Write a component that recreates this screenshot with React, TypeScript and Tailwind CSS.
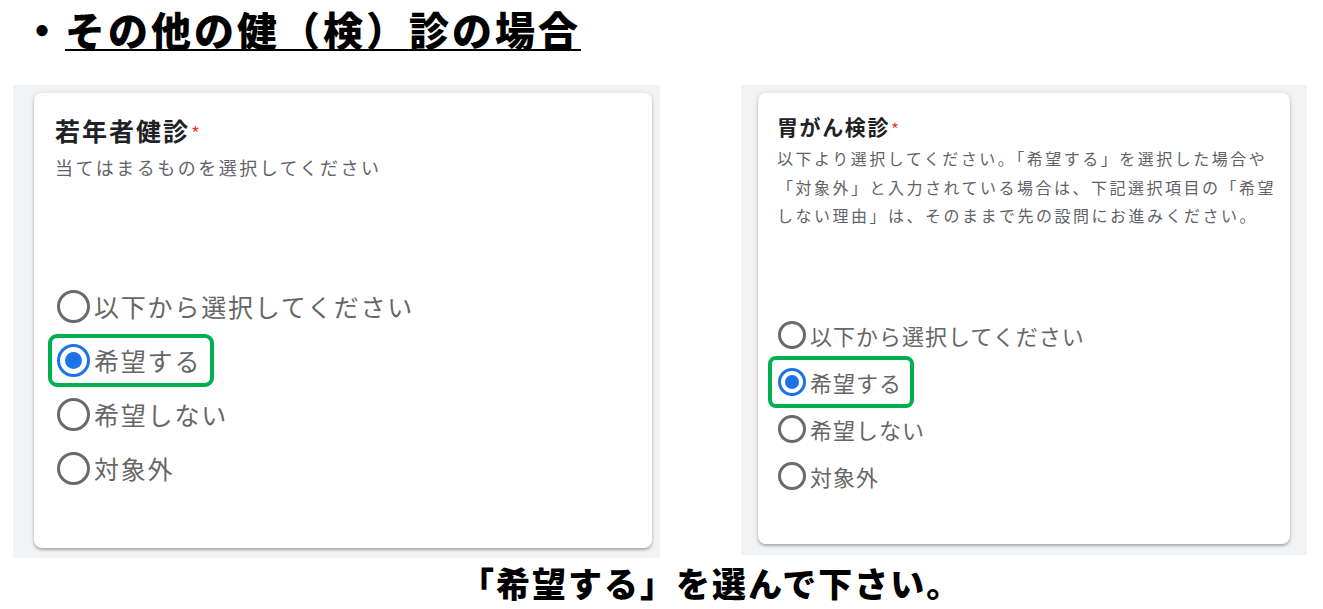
import React from 'react';

const jp = { fontFamily: '"Noto Sans CJK JP", "Noto Sans", Roboto, sans-serif' };

type Opt = { label: string; selected?: boolean };

const options: Opt[] = [
  { label: '以下から選択してください' },
  { label: '希望する', selected: true },
  { label: '希望しない' },
  { label: '対象外' },
];

const Radio: React.FC<{ selected?: boolean; big?: boolean }> = ({ selected, big }) => {
  const size = big ? 'w-[33px] h-[33px]' : 'w-[28px] h-[28px]';
  if (selected) {
    return (
      <span className={`${size} shrink-0 rounded-full border-[3px] border-[#1a73e8] flex items-center justify-center`}>
        <span className={`${big ? 'w-[17px] h-[17px]' : 'w-[14px] h-[14px]'} rounded-full bg-[#1a73e8]`} />
      </span>
    );
  }
  return <span className={`${size} shrink-0 rounded-full border-[3px] border-[#6a6a6a]`} />;
};

const App: React.FC = () => {
  return (
    <div className="w-[1323px] h-[609px] bg-white overflow-hidden text-black" style={jp}>
      {/* heading */}
      <div className="h-[85px] pl-[22px]">
        <h1 className="text-[40px] leading-[58px] font-black tracking-[3px]">
          <span>・</span>
          <span className="underline decoration-[2px] underline-offset-[3px]">その他の健（検）診の場合</span>
        </h1>
      </div>

      <div className="flex pl-[13px] gap-[81px]">
        {/* left screenshot */}
        <div className="w-[647px] h-[473px] bg-[#f2f3f5] pl-[21px] pr-[8px] pt-[8px] pb-[10px]">
          <div className="h-full bg-white rounded-[8px] shadow-[0_2px_3px_rgba(0,0,0,0.28),0_0_6px_rgba(0,0,0,0.08)] pl-[21px] pt-[21px]">
            <div className="flex items-start">
              <span className="text-[25px] leading-[32px] font-bold tracking-[2px] text-[#202124]">若年者健診</span>
              <span className="text-[19px] leading-[20px] mt-[9px] ml-[1px] text-[#e5413b]">*</span>
            </div>
            <p className="mt-[9px] text-[18px] leading-[24px] tracking-[2.5px] text-[#5f6368]">当てはまるものを選択してください</p>
            <div className="mt-[100px] pl-[2px]">
              {options.map((o) => (
                <div key={o.label} className="h-[54px] flex items-center">
                  <span
                    className={`flex items-center gap-[4px] ${
                      o.selected ? '-ml-[9px] pl-[5px] pr-[9px] h-[53px] border-[4px] border-[#00b050] rounded-[9px]' : ''
                    }`}
                  >
                    <Radio selected={o.selected} big />
                    <span className="text-[25px] leading-[32px] tracking-[1.8px] text-[#666666]">{o.label}</span>
                  </span>
                </div>
              ))}
            </div>
          </div>
        </div>

        {/* right screenshot */}
        <div className="w-[566px] h-[470px] bg-[#f2f3f5] px-[17px] pt-[8px] pb-[11px]">
          <div className="h-full bg-white rounded-[8px] shadow-[0_2px_3px_rgba(0,0,0,0.28),0_0_6px_rgba(0,0,0,0.08)] pl-[19px] pt-[19px]">
            <div className="flex items-start">
              <span className="text-[21px] leading-[28px] font-bold tracking-[1.6px] text-[#202124]">胃がん検診</span>
              <span className="text-[17px] leading-[18px] mt-[8px] ml-[1px] text-[#e5413b]">*</span>
            </div>
            <p className="mt-[4px] text-[16px] leading-[28.5px] tracking-[2.5px] text-[#5f6368] w-[512px]">
              以下より選択してください。「希望する」を選択した場合や「対象外」と入力されている場合は、下記選択項目の「希望しない理由」は、そのままで先の設問にお進みください。
            </p>
            <div className="mt-[82px] pl-[1px]">
              {options.map((o) => (
                <div key={o.label} className="h-[47px] flex items-center">
                  <span
                    className={`flex items-center gap-[4px] ${
                      o.selected ? '-ml-[10px] pl-[6px] pr-[8px] h-[52px] border-[4px] border-[#00b050] rounded-[8px]' : ''
                    }`}
                  >
                    <Radio selected={o.selected} />
                    <span className="text-[22px] leading-[28px] tracking-[1px] text-[#666666]">{o.label}</span>
                  </span>
                </div>
              ))}
            </div>
          </div>
        </div>
      </div>

      {/* footer instruction */}
      <div className="pl-[460px] pt-[4px]">
        <p className="text-[34px] leading-[42px] font-black tracking-[2px]">「希望する」を選んで下さい。</p>
      </div>
    </div>
  );
};

export default App;
